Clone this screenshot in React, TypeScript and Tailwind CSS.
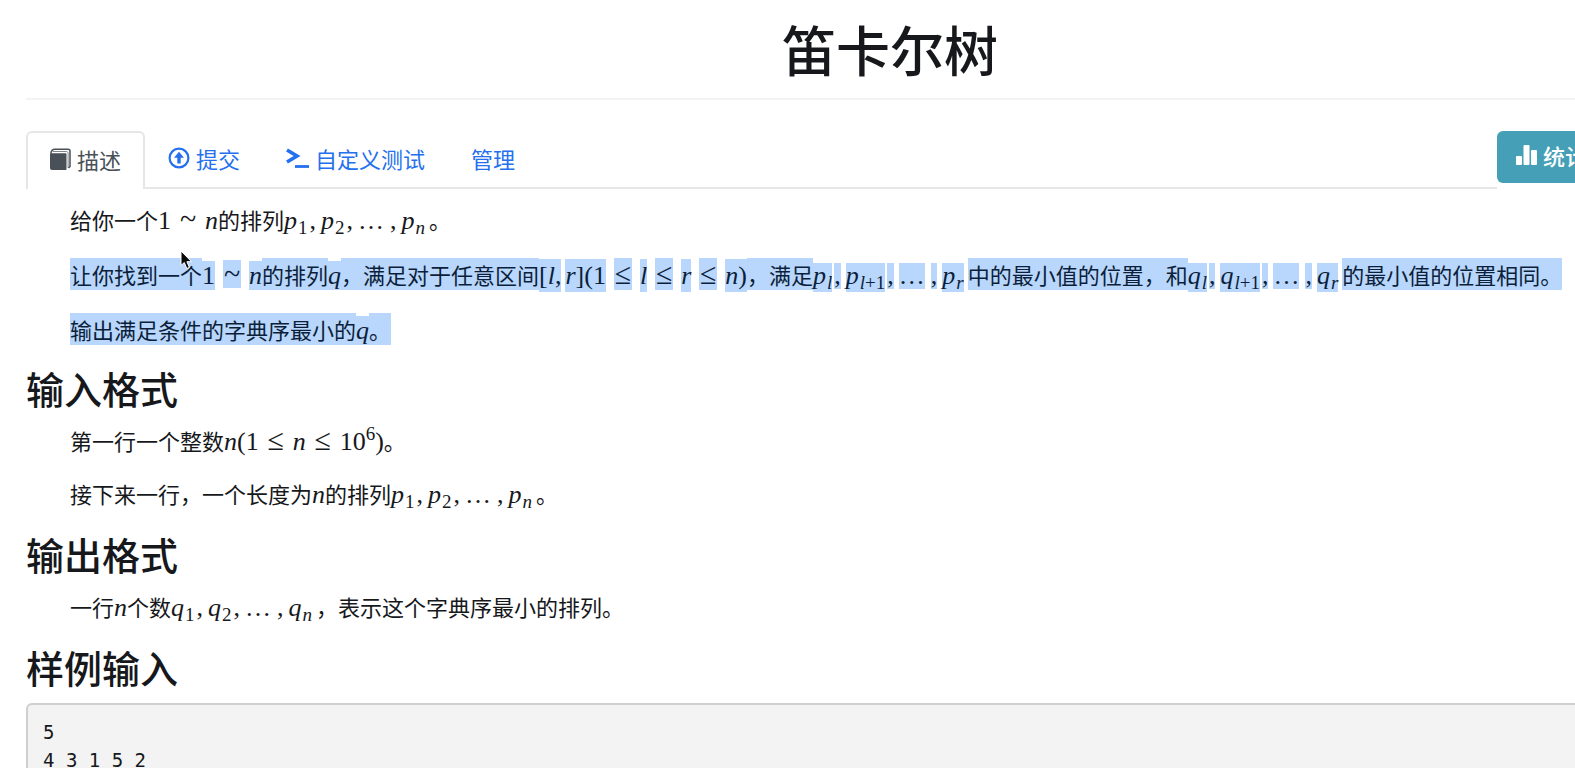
import React from "react";
import clsx from "clsx";

type MathProps = { children: React.ReactNode; on?: boolean; tall?: boolean };

const selected = "bg-[#b9d6fc] text-[#0b1f3a]";

// run of Chinese text, optionally selected
function T({ children, on }: MathProps) {
  return <span className={clsx(on && selected)}>{children}</span>;
}

// upright math: digits and brackets
function N({ children, on, tall }: MathProps) {
  return (
    <span className={clsx("font-['Liberation_Serif',serif] text-[26px] leading-none", on && selected, tall && "py-[2px]")}>
      {children}
    </span>
  );
}

// italic variable with optional subscript
function V({ children, sub, on, tall }: MathProps & { sub?: React.ReactNode }) {
  return (
    <span
      className={clsx(
        "font-['Liberation_Serif',serif] text-[26px] leading-none",
        sub && "inline-block",
        on && selected,
        tall && "py-[2px]"
      )}
    >
      <i>{children}</i>
      {sub && <span className="ml-px inline-block align-[-5px] text-[19px] leading-none">{sub}</span>}
    </span>
  );
}

// relation sign with math spacing round it
function R({ children, on, tall }: MathProps) {
  return (
    <span
      className={clsx(
        "mx-2 inline-block w-[18px] text-center font-['Liberation_Serif',serif] text-[30px]",
        tall ? "leading-8" : "leading-7",
        on && selected
      )}
    >
      {children}
    </span>
  );
}

function Comma({ on }: { on?: boolean }) {
  return (
    <span className={clsx("ml-[2px] mr-[5px] inline-block font-['Liberation_Serif',serif] text-[26px] leading-none", on && selected)}>,</span>
  );
}

function Dots({ on }: { on?: boolean }) {
  return (
    <span className={clsx("mr-1 inline-block font-['Liberation_Serif',serif] text-[26px] leading-none", on && selected)}>…</span>
  );
}

function Sequence({ name, first, second, last, on }: { name: string; first: React.ReactNode; second: React.ReactNode; last: React.ReactNode; on?: boolean }) {
  return (
    <span className="mr-1">
      <V on={on} sub={first}>{name}</V>
      <Comma on={on} />
      <V on={on} sub={second}>{name}</V>
      <Comma on={on} />
      <Dots on={on} />
      <Comma on={on} />
      <V on={on} sub={last}>{name}</V>
    </span>
  );
}

function BookIcon() {
  return (
    <svg viewBox="0 0 21 24" className="h-6 w-[21px]" fill="none" aria-hidden="true">
      <path d="M0 6.200h15.500c.6 0 1 .4 1 1V22c0 .6-.4 1-1 1H2c-1.100 0-2-.9-2-2z" fill="currentColor" />
      <path d="M.9 6.500C1.200 3.600 2.600 2.200 4.800 2.200H18c1.300 0 2 .8 2 2v15.300l-1.500 1.500" stroke="currentColor" strokeWidth="1.500" />
      <path d="M2.800 4.500h13.500c1.200 0 1.800.7 1.800 1.900V21" stroke="currentColor" strokeWidth=".7" />
    </svg>
  );
}

function UploadIcon() {
  return (
    <svg viewBox="0 0 22 22" className="size-[22px]" fill="none" aria-hidden="true">
      <circle cx="11" cy="11" r="9.400" stroke="currentColor" strokeWidth="2.200" />
      <path d="M11 4.800l5 6h-3.300V16.500H9.300v-5.700H6z" fill="currentColor" />
    </svg>
  );
}

function TerminalIcon() {
  return (
    <svg viewBox="0 0 23 22" className="h-[22px] w-[23px]" fill="none" stroke="currentColor" aria-hidden="true">
      <path d="M1 3l10 6L1 15" strokeWidth="3.600" />
      <path d="M9 19.500h14" strokeWidth="2.800" />
    </svg>
  );
}

function StatsIcon() {
  return (
    <svg viewBox="0 0 21 22" className="h-[22px] w-[21px]" fill="currentColor" aria-hidden="true">
      <rect x="0" y="12" width="6" height="9" rx="1" />
      <rect x="7.500" y="1" width="6" height="20" rx="1" />
      <rect x="15" y="6" width="6" height="15" rx="1" />
    </svg>
  );
}

const tabs = [
  { label: "提交", icon: <UploadIcon /> },
  { label: "自定义测试", icon: <TerminalIcon /> },
  { label: "管理", icon: null },
];

function Section({ title, children }: { title: string; children?: React.ReactNode }) {
  return (
    <section>
      <h3 className="mb-[14px] text-[38px] font-medium leading-[44px]">{title}</h3>
      {children}
    </section>
  );
}

function Para({ children }: { children: React.ReactNode }) {
  return <p className="mb-[21px] ml-11 whitespace-nowrap leading-8">{children}</p>;
}

export default function App() {
  return (
    <div className="relative h-screen overflow-hidden bg-white font-['Noto_Sans_CJK_SC',sans-serif] text-[22px] text-[#16181b]">
      <main className="ml-[26px] w-[calc(100%+153px)]">
        <h1 className="border-b-2 border-[#f3f3f3] pb-4 pt-4 text-center text-[54px] font-medium leading-[66px]">笛卡尔树</h1>

        <div className="mt-[31px] flex items-start">
          <nav className="flex h-[58px] grow items-stretch border-b-2 border-[#e6e6e6]">
            <a href="#description" className="-mb-[2px] flex items-center gap-[6px] rounded-t-md border-2 border-b-0 border-[#e6e6e6] bg-white px-[22px] pb-1 text-[#495057]">
              <BookIcon />
              描述
            </a>
            {tabs.map((tab) => (
              <a key={tab.label} href="#tab" className="flex items-center gap-[6px] px-[23px] pb-[2px] text-[#2470ee]">
                {tab.icon}
                {tab.label}
              </a>
            ))}
          </nav>
          <div className="w-[257px] shrink-0">
            <button className="flex h-[52px] items-center gap-[6px] rounded-md bg-[#459fb6] px-[19px] pb-1 font-medium text-white">
              <StatsIcon />
              统计
            </button>
          </div>
        </div>

        <article className="mt-[14px]">
          <Para>
            给你一个<N>1</N><R>~</R><V>n</V>的排列
            <Sequence name="p" first="1" second="2" last={<i>n</i>} />。
          </Para>
          <Para>
            <T on>让你找到一个</T><N on>1</N><R on>~</R><V on>n</V><T on>的排列</T><V on>q</V>
            <T on>，满足对于任意区间</T>
            <N on tall>[<i>l</i>,</N><span className="ml-1"><N on tall><i>r</i>](1</N></span>
            <R on tall>≤</R><V on tall>l</V><R on tall>≤</R><V on tall>r</V><R on tall>≤</R><N on tall><i>n</i>)</N>
            <T on>，满足</T>
            <Sequence on name="p" first={<i>l</i>} second={<><i>l</i>+1</>} last={<i>r</i>} />
            <T on>中的最小值的位置，和</T>
            <Sequence on name="q" first={<i>l</i>} second={<><i>l</i>+1</>} last={<i>r</i>} />
            <T on>的最小值的位置相同。</T>
          </Para>
          <Para>
            <T on>输出满足条件的字典序最小的</T><V on>q</V><T on>。</T>
          </Para>

          <Section title="输入格式">
            <Para>
              第一行一个整数<V>n</V><N>(1</N><R>≤</R><V>n</V><R>≤</R>
              <N>10<span className="inline-block align-[10px] text-[19px] leading-none">6</span>)</N>。
            </Para>
            <Para>
              接下来一行，一个长度为<V>n</V>的排列
              <Sequence name="p" first="1" second="2" last={<i>n</i>} />。
            </Para>
          </Section>

          <Section title="输出格式">
            <Para>
              一行<V>n</V>个数
              <Sequence name="q" first="1" second="2" last={<i>n</i>} />，表示这个字典序最小的排列。
            </Para>
          </Section>

          <Section title="样例输入">
            <pre className="rounded-md border-2 border-[#cfcfcf] bg-[#f3f3f3] px-[15px] pb-5 pt-[13px] font-['DejaVu_Sans_Mono',monospace] text-[19px] leading-7">
              {"5\n4 3 1 5 2"}
            </pre>
          </Section>
        </article>
      </main>

      {/* mouse pointer */}
      <svg viewBox="0 0 14 20" className="absolute left-[180px] top-[250px] h-5 w-[14px]" aria-hidden="true">
        <path d="M1 1v14.500l3.300-3 2.500 6 2.600-1.100-2.500-5.700h4.600z" fill="#0a0a0a" stroke="#fff" strokeWidth="1" />
      </svg>
    </div>
  );
}
